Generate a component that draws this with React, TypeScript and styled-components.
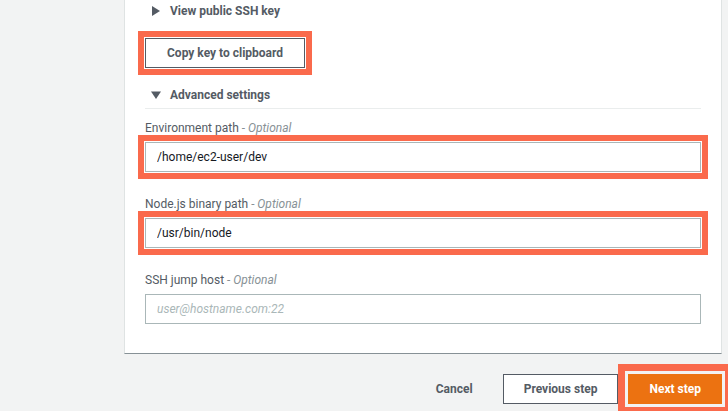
import React from "react";
import styled, { createGlobalStyle, css } from "styled-components";

const GlobalStyle = createGlobalStyle`
  html, body {
    margin: 0;
    padding: 0;
    background: #f2f3f3;
    font-family: Roboto, "Liberation Sans", Arial, sans-serif;
  }
  * {
    box-sizing: border-box;
  }
`;

type Mark = "thin" | "thick";

const markCss = (mark?: Mark) =>
  mark &&
  css`
    outline: ${mark === "thick" ? "7px" : "6px"} solid #fa6a4c;
    outline-offset: ${mark === "thick" ? "3px" : "1px"};
  `;

const Page = styled.div`
  width: 728px;
  height: 411px;
  overflow: hidden;
  padding: 0 6px 0 124px;
`;

const Panel = styled.section`
  background: #fff;
  border-left: 1px solid #dfe3e3;
  border-right: 1px solid #dfe3e3;
  border-bottom: 1px solid #879196;
  padding: 0 20px 29px 20px;
  display: flex;
  flex-direction: column;
`;

const Toggle = styled.div<{ $top: number }>`
  height: 22px;
  margin-top: ${(p) => p.$top}px;
  padding-left: 6px;
  display: flex;
  align-items: center;
  gap: 9px;
  color: #545b64;
  font-size: 12px;
  font-weight: 700;
`;

const Caret = styled.svg`
  width: 10px;
  height: 10px;
  fill: #545b64;
  flex: none;
`;

const Button = styled.button<{ $primary?: boolean; $mark?: Mark }>`
  height: 30px;
  padding: 0 20px;
  border: 1px solid ${(p) => (p.$primary ? "#ec7211" : "#545b64")};
  background: ${(p) => (p.$primary ? "#ec7211" : "#fff")};
  color: ${(p) => (p.$primary ? "#fff" : "#545b64")};
  font-family: inherit;
  font-size: 12px;
  font-weight: 700;
  border-radius: 0;
  cursor: pointer;
  ${(p) => markCss(p.$mark)}
`;

const CopyButton = styled(Button)`
  align-self: flex-start;
  margin-top: 16px;
  padding: 0 21px;
`;

const Divider = styled.hr`
  margin: 2px 0 0 0;
  border: 0;
  border-top: 1px solid #eaeded;
`;

const Fields = styled.div`
  margin-top: 11px;
  display: flex;
  flex-direction: column;
  gap: 24px;
`;

const Field = styled.label`
  display: flex;
  flex-direction: column;
  gap: 6px;
`;

const Label = styled.span`
  line-height: 16px;
  font-size: 12px;
  color: #545b64;
`;

const Optional = styled.i`
  color: #879196;
`;

const Input = styled.input<{ $mark?: Mark }>`
  height: 30px;
  width: 100%;
  padding: 0 11px;
  border: 1px solid #aab7b8;
  border-radius: 0;
  font-family: inherit;
  font-size: 12px;
  color: #16191f;
  background: #fff;
  ${(p) => markCss(p.$mark)}

  &::placeholder {
    color: #aab7b8;
    font-style: italic;
  }
`;

const Footer = styled.div`
  margin-top: 20px;
  display: flex;
  justify-content: flex-end;
  align-items: center;
  gap: 10px;
`;

const LinkButton = styled(Button)`
  border-color: transparent;
  background: transparent;
  padding: 0 19px;
`;

const RightCaret = () => (
  <Caret viewBox="0 0 10 10">
    <path d="M1 0 L9 5 L1 10 Z" />
  </Caret>
);

const DownCaret = () => (
  <Caret viewBox="0 0 10 10">
    <path d="M0 1.5 L10 1.5 L5 9 Z" />
  </Caret>
);

const fields = [
  { label: "Environment path", value: "/home/ec2-user/dev", mark: "thin" as Mark },
  { label: "Node.js binary path", value: "/usr/bin/node", mark: "thin" as Mark },
  { label: "SSH jump host", placeholder: "user@hostname.com:22" },
];

export default function App() {
  return (
    <>
      <GlobalStyle />
      <Page>
        <Panel>
          <Toggle $top={0}>
            <RightCaret />
            View public SSH key
          </Toggle>
          <CopyButton $mark="thin">Copy key to clipboard</CopyButton>
          <Toggle $top={16}>
            <DownCaret />
            Advanced settings
          </Toggle>
          <Divider />
          <Fields>
            {fields.map((f) => (
              <Field key={f.label}>
                <Label>
                  {f.label} <Optional>- Optional</Optional>
                </Label>
                <Input
                  $mark={f.mark}
                  defaultValue={f.value}
                  placeholder={f.placeholder}
                />
              </Field>
            ))}
          </Fields>
        </Panel>
        <Footer>
          <LinkButton>Cancel</LinkButton>
          <Button>Previous step</Button>
          <Button $primary $mark="thick">
            Next step
          </Button>
        </Footer>
      </Page>
    </>
  );
}
